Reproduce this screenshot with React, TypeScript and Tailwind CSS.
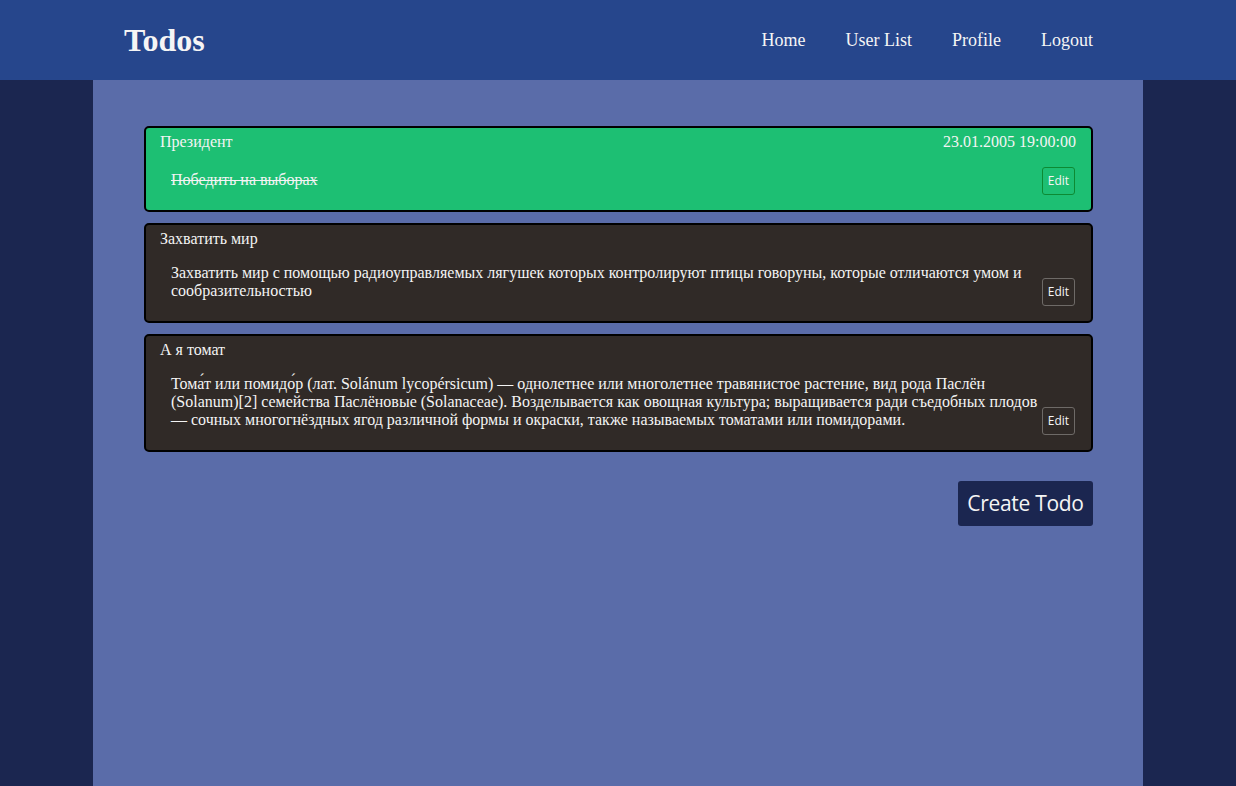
import React from 'react';

type Todo = {
    title: string;
    text: string;
    done?: boolean;
    date?: string;
};

const todos: Todo[] = [
    { title: 'Президент', text: 'Победить на выборах', done: true, date: '23.01.2005 19:00:00' },
    {
        title: 'Захватить мир',
        text: 'Захватить мир с помощью радиоуправляемых лягушек которых контролируют птицы говоруны, которые отличаются умом и сообразительностью',
    },
    {
        title: 'А я томат',
        text: 'Тома́т или помидо́р (лат. Solánum lycopérsicum) — однолетнее или многолетнее травянистое растение, вид рода Паслён (Solanum)[2] семейства Паслёновые (Solanaceae). Возделывается как овощная культура; выращивается ради съедобных плодов — сочных многогнёздных ягод различной формы и окраски, также называемых томатами или помидорами.',
    },
];

function TodoCard({ todo }: { todo: Todo }) {
    return (
        <div
            className={`rounded-[5px] border-2 border-black pl-[14px] pr-[16px] pt-[5px] pb-[15px] text-[#f4f4f4] ${
                todo.done ? 'bg-[#1dbf73]' : 'bg-[#302a27]'
            }`}
        >
            <div className="flex justify-between text-[16px] leading-[18px]">
                <span>{todo.title}</span>
                {todo.date && <span className="mr-[-1px]">{todo.date}</span>}
            </div>
            <div className="flex items-end justify-between">
                <p
                    className={`mb-[6px] flex-1 pl-[11px] pr-[4px] text-[16px] leading-[18px] ${
                        todo.done ? 'mt-[20px] line-through' : 'mt-[16px]'
                    }`}
                >
                    {todo.text}
                </p>
                <button
                    className={`h-[28px] w-[33px] shrink-0 rounded-[3px] border text-[12px] text-[#f4f4f4] font-['Open_Sans',sans-serif] ${
                        todo.done ? 'border-[#0d8a33]' : 'border-[#6e6a67]'
                    }`}
                >
                    Edit
                </button>
            </div>
        </div>
    );
}

export default function App() {
    return (
        <div className="min-h-[786px] bg-[#1b2650] font-['Liberation_Serif',serif] flex flex-col">
            {/* Header */}
            <header className="h-[80px] bg-[#26468c]">
                <div className="mx-auto flex h-full w-[1050px] items-center justify-between pl-[31px] pr-[50px]">
                    <h1 className="text-[32px] font-bold text-[#f5f5f5]">Todos</h1>
                    <nav className="flex gap-[40px] text-[18px] text-[#f5f5f5]">
                        <a href="#">Home</a>
                        <a href="#">User List</a>
                        <a href="#">Profile</a>
                        <a href="#">Logout</a>
                    </nav>
                </div>
            </header>

            {/* Main */}
            <main className="mx-auto w-[1050px] flex-1 bg-[#5a6ca9] pl-[51px] pr-[50px] pt-[46px]">
                <div className="flex flex-col gap-[11px]">
                    {todos.map((t) => (
                        <TodoCard key={t.title} todo={t} />
                    ))}
                </div>
                <div className="mt-[29px] flex justify-end">
                    <button className="h-[45px] w-[135px] rounded-[3px] bg-[#1b2650] text-[21px] tracking-[-0.3px] text-[#f5f5f5] font-['Open_Sans',sans-serif]">
                        Create Todo
                    </button>
                </div>
            </main>
        </div>
    );
}
